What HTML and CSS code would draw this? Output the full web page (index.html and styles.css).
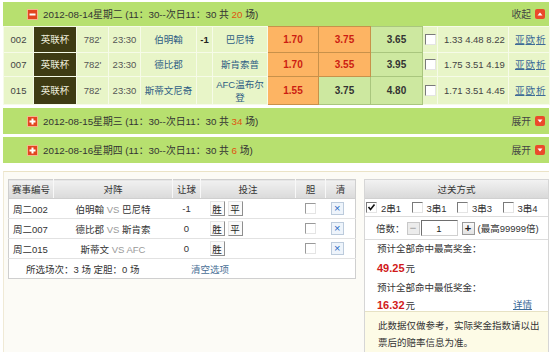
FILE: index.html
```html
<!DOCTYPE html>
<html lang="zh-CN">
<head>
<meta charset="utf-8">
<title>竞彩</title>
<link rel="stylesheet" href="styles.css">
</head>
<body>
<div class="page">
  <section class="day">
    <div class="day-head first">
      <div class="day-title">
        <svg class="sq" width="11" height="11" viewBox="0 0 11 11"><rect x="0.5" y="0.5" width="10" height="10" fill="#e2461f" stroke="#f3b58c"/><rect x="2.5" y="4.5" width="6" height="2" fill="#fff"/></svg>
        <span>2012-08-14星期二 (11：30--次日11：30 共 <em>20</em> 场)</span>
      </div>
      <div class="toggle">收起<svg class="tg" width="10" height="10" viewBox="0 0 10 10"><rect x="0" y="0" width="10" height="10" rx="2" fill="#ea4a2b"/><path d="M2.5 6.5 L5 3.5 L7.5 6.5 Z" fill="#fff"/></svg></div>
    </div>
    <table class="matches">
      <colgroup>
        <col class="c1"><col class="c2"><col class="c3"><col class="c4"><col class="c5"><col class="c6"><col class="c7"><col class="c8"><col class="c9"><col class="c10"><col class="c11"><col class="c12"><col class="c13">
      </colgroup>
      <tr class="r1">
        <td>002</td><td class="lg">英联杯</td><td class="gr">782'</td><td class="gr">23:30</td>
        <td class="team">伯明翰</td><td class="hc">-1</td><td class="team">巴尼特</td>
        <td class="od sel"><b>1.70</b></td><td class="od sel"><b>3.75</b></td><td class="od">3.65</td>
        <td><span class="cb"></span></td><td class="eu">1.33 4.48 8.22</td>
        <td class="lk"><a>亚</a><a>欧</a><a>析</a></td>
      </tr>
      <tr class="r2">
        <td>007</td><td class="lg">英联杯</td><td class="gr">782'</td><td class="gr">23:30</td>
        <td class="team">德比郡</td><td class="hc"></td><td class="team">斯肯索普</td>
        <td class="od sel"><b>1.70</b></td><td class="od sel"><b>3.55</b></td><td class="od">3.95</td>
        <td><span class="cb"></span></td><td class="eu">1.75 3.51 4.19</td>
        <td class="lk"><a>亚</a><a>欧</a><a>析</a></td>
      </tr>
      <tr class="r3">
        <td>015</td><td class="lg">英联杯</td><td class="gr">782'</td><td class="gr">23:30</td>
        <td class="team">斯蒂文尼奇</td><td class="hc"></td><td class="team">AFC温布尔登</td>
        <td class="od sel"><b>1.55</b></td><td class="od">3.75</td><td class="od">4.80</td>
        <td><span class="cb"></span></td><td class="eu">1.71 3.51 4.45</td>
        <td class="lk"><a>亚</a><a>欧</a><a>析</a></td>
      </tr>
    </table>
  </section>

  <section class="day">
    <div class="day-head">
      <div class="day-title">
        <svg class="sq" width="11" height="11" viewBox="0 0 11 11"><rect x="0.5" y="0.5" width="10" height="10" fill="#e2461f" stroke="#f3b58c"/><rect x="2.5" y="4.5" width="6" height="2" fill="#fff"/><rect x="4.5" y="2.5" width="2" height="6" fill="#fff"/></svg>
        <span>2012-08-15星期三 (11：30--次日11：30 共 <em>34</em> 场)</span>
      </div>
      <div class="toggle">展开<svg class="tg" width="10" height="10" viewBox="0 0 10 10"><rect x="0" y="0" width="10" height="10" rx="2" fill="#ea4a2b"/><path d="M2.5 3.5 L7.5 3.5 L5 6.5 Z" fill="#fff"/></svg></div>
    </div>
  </section>

  <section class="day">
    <div class="day-head">
      <div class="day-title">
        <svg class="sq" width="11" height="11" viewBox="0 0 11 11"><rect x="0.5" y="0.5" width="10" height="10" fill="#e2461f" stroke="#f3b58c"/><rect x="2.5" y="4.5" width="6" height="2" fill="#fff"/><rect x="4.5" y="2.5" width="2" height="6" fill="#fff"/></svg>
        <span>2012-08-16星期四 (11：30--次日11：30 共 <em>6</em> 场)</span>
      </div>
      <div class="toggle">展开<svg class="tg" width="10" height="10" viewBox="0 0 10 10"><rect x="0" y="0" width="10" height="10" rx="2" fill="#ea4a2b"/><path d="M2.5 3.5 L7.5 3.5 L5 6.5 Z" fill="#fff"/></svg></div>
    </div>
  </section>

  <div class="bet-area">
    <table class="picks">
      <colgroup><col class="p1"><col class="p2"><col class="p3"><col class="p4"><col class="p5"><col class="p6"></colgroup>
      <thead>
        <tr><th>赛事编号</th><th>对阵</th><th>让球</th><th>投注</th><th>胆</th><th>清</th></tr>
      </thead>
      <tbody>
        <tr>
          <td class="no">周二002</td><td class="vsc">伯明翰 <span class="vs">VS</span> 巴尼特</td><td>-1</td>
          <td class="bets"><span class="btn">胜</span><span class="btn">平</span></td>
          <td><span class="cb light"></span></td><td><span class="clr">×</span></td>
        </tr>
        <tr>
          <td class="no">周二007</td><td class="vsc">德比郡 <span class="vs">VS</span> 斯肯索</td><td>0</td>
          <td class="bets"><span class="btn">胜</span><span class="btn">平</span></td>
          <td><span class="cb light"></span></td><td><span class="clr">×</span></td>
        </tr>
        <tr>
          <td class="no">周二015</td><td class="vsc">斯蒂文 <span class="vs">VS AFC</span></td><td>0</td>
          <td class="bets"><span class="btn">胜</span></td>
          <td><span class="cb light"></span></td><td><span class="clr">×</span></td>
        </tr>
        <tr class="sum">
          <td colspan="6"><span class="count">所选场次：3 场 定胆：0 场</span><a class="clear">清空选项</a></td>
        </tr>
      </tbody>
    </table>

    <div class="panel">
      <div class="panel-head">过关方式</div>
      <div class="types">
        <span class="type"><span class="cb on"><svg width="9" height="9" viewBox="0 0 9 9"><path d="M1.5 4 L3.5 6.5 L7.5 1.5" fill="none" stroke="#111" stroke-width="1.6"/></svg></span>2串1</span>
        <span class="type"><span class="cb"></span>3串1</span>
        <span class="type"><span class="cb"></span>3串3</span>
        <span class="type"><span class="cb"></span>3串4</span>
      </div>
      <div class="multi">
        <span>倍数：</span>
        <span class="pm off">−</span>
        <span class="inp">1</span>
        <span class="pm">+</span>
        <span>(最高99999倍)</span>
      </div>
      <div class="prize">
        <p class="l1">预计全部命中最高奖金：</p>
        <p class="l2"><b>49.25</b>元</p>
        <p class="l3">预计全部命中最低奖金：</p>
        <p class="l4"><span><b>16.32</b>元</span><a class="detail">详情</a></p>
      </div>
      <div class="note">此数据仅做参考，实际奖金指数请以出票后的赔率信息为准。</div>
    </div>
  </div>
</div>
</body>
</html>
```

FILE: styles.css
```css
* { box-sizing: border-box; }
html, body { margin: 0; padding: 0; background: #fff; }
body {
  font-family: "Liberation Sans", "Noto Sans CJK SC", sans-serif;
  font-size: 9.5px;
  color: #333;
  overflow: hidden;
  height: 352px;
}
a { color: #3d6b97; text-decoration: underline; }
p { margin: 0; }

.page { padding: 2px 1px 0 3px; width: 550px; height: 352px; overflow: hidden; }

/* day headers */
.day + .day { margin-top: 3px; }
.day-head {
  height: 26px;
  display: flex;
  align-items: center;
  justify-content: space-between;
  background: #b7e06f;
  padding: 0 4px 0 24px;
  color: #333;
}
.day-head.first { height: 24px; }
.day-title { display: flex; align-items: center; gap: 5px; font-size: 9.8px; }
.day-title em { font-style: normal; color: #e0540f; }
.toggle { display: flex; align-items: center; gap: 4px; color: #444; font-size: 9.8px; }
.sq, .tg { display: block; }

/* matches table */
.matches {
  width: 546px;
  border-collapse: collapse;
  table-layout: fixed;
  background: #e8f5c8;
}
.c1 { width: 30px; } .c2 { width: 43px; } .c3 { width: 32px; } .c4 { width: 32px; }
.c5 { width: 56px; } .c6 { width: 16px; } .c7 { width: 55px; } .c8 { width: 51px; }
.c9 { width: 52px; } .c10 { width: 52px; } .c11 { width: 15px; } .c12 { width: 71px; } .c13 { width: 41px; }
.matches td {
  border: 1px solid #f6fbe8;
  text-align: center;
  padding: 0 1px;
  color: #444;
  line-height: 12px;
}
.matches .r1 td { height: 26px; }
.matches .r2 td { height: 24px; }
.matches .r3 td { height: 28px; }
.matches td.lg { background: #3e3b14; color: #eeeedd; }
.matches td.gr { color: #555; }
.matches td.team { color: #2e5d84; padding: 0 3px; line-height: 13px; }
.matches td.hc { font-weight: bold; color: #222; }
.matches td.od {
  background: #cde8a0;
  border: 1px solid #a9c67e;
  font-weight: bold;
  font-size: 10px;
  color: #333;
}
.matches td.od.sel {
  background: #fdb463;
  border: 1px solid #c8914a;
  color: #cc1d12;
}
.matches td.eu { color: #444; text-align: left; padding-left: 6px; }
.matches td.lk { text-align: left; padding-left: 6px; }
.matches td.lk a { margin-right: 1px; color: #3d6b97; }

/* classic checkbox */
.cb {
  display: inline-block;
  width: 11px;
  height: 11px;
  background: #fff;
  border-top: 1px solid #7a7a7a;
  border-left: 1px solid #7a7a7a;
  border-right: 1px solid #e4e4e4;
  border-bottom: 1px solid #e4e4e4;
  vertical-align: middle;
}
.cb.light { border-top-color: #9a9a9a; border-left-color: #9a9a9a; }
.cb svg { display: block; margin: 0; }

/* bottom area */
.bet-area {
  margin-top: 8px;
  border-top: 1px solid #ebe3c6;
  border-left: 1px solid #f0ead6;
  background: #fcfbf6;
  padding: 7px 0 0 4px;
  display: flex;
  align-items: flex-start;
  gap: 8px;
  height: 182px;
}

.picks {
  width: 347px;
  border-collapse: collapse;
  table-layout: fixed;
  border: 1px solid #cfcfcf;
  background: #fff;
}
.p1 { width: 45px; } .p2 { width: 119px; } .p3 { width: 28px; }
.p4 { width: 95px; } .p5 { width: 30px; } .p6 { width: 30px; }
.picks th {
  height: 19px;
  font-weight: normal;
  color: #333;
  background: linear-gradient(#f1f1f1, #dadada);
  border-left: 1px solid #f8f8f8;
  border-bottom: 1px solid #cfcfcf;
  text-align: center;
  padding: 0;
}
.picks th:first-child { border-left: none; }
.picks td {
  height: 20px;
  border-bottom: 1px solid #e2e2e2;
  text-align: center;
  padding: 0;
  color: #333;
}
.picks td.no { text-align: left; padding-left: 4px; }
.picks .vs { color: #999; }
.picks td.bets { text-align: left; padding-left: 9px; }
.btn {
  display: inline-flex;
  align-items: center;
  justify-content: center;
  width: 15px;
  height: 15px;
  margin-right: 3px;
  background: #fafafa;
  border-top: 1px solid #e6e6e6;
  border-left: 1px solid #e6e6e6;
  border-right: 1px solid #8e8e8e;
  border-bottom: 1px solid #8e8e8e;
  color: #222;
  vertical-align: middle;
}
.clr {
  display: inline-flex;
  align-items: center;
  justify-content: center;
  width: 13px;
  height: 13px;
  background: #eef4fb;
  border: 1px solid #bccbdc;
  color: #2c6cc4;
  font-size: 11px;
  line-height: 1;
  vertical-align: middle;
  margin-right: 6px;
}
.picks tr.sum td { border-bottom: none; text-align: left; padding-left: 17px; }
.count { display: inline-block; width: 165px; color: #333; }
.clear { color: #4a6f96; text-decoration: none; }

/* right panel */
.panel {
  width: 186px;
  border: 1px solid #d6d6d6;
  border-bottom: none;
  background: #fff;
  height: 174px;
  overflow: hidden;
}
.panel-head {
  height: 19px;
  display: flex;
  align-items: center;
  justify-content: center;
  background: linear-gradient(#f2f2f2, #d9d9d9);
  border-bottom: 1px solid #d0d0d0;
  color: #333;
}
.types {
  height: 18px;
  display: flex;
  align-items: center;
  padding-left: 1px;
  border-bottom: 1px solid #dcdcdc;
}
.type { width: 46px; display: flex; align-items: center; gap: 4px; color: #333; }
.multi {
  height: 23px;
  display: flex;
  align-items: center;
  padding-left: 11px;
  border-bottom: 1px solid #dcdcdc;
  color: #333;
}
.pm {
  display: inline-flex;
  align-items: center;
  justify-content: center;
  width: 13px;
  height: 13px;
  border: 1px solid #9a9a9a;
  background: linear-gradient(#fafafa, #e2e2e2);
  color: #222;
  font-weight: bold;
  font-size: 11px;
  line-height: 1;
  margin-left: 2px;
}
.pm.off { border-color: #c8c8c8; color: #b0b0b0; background: #ececec; }
.inp {
  display: inline-flex;
  align-items: center;
  justify-content: center;
  width: 37px;
  height: 16px;
  margin: 0 2px 0 1px;
  background: #fff;
  border-top: 1px solid #6e6e6e;
  border-left: 1px solid #6e6e6e;
  border-right: 1px solid #d0d0d0;
  border-bottom: 1px solid #d0d0d0;
  color: #222;
}
.pm + span:last-child { margin-left: 3px; }
.prize { padding: 0 8px 0 12px; height: 71px; }
.prize .l1 { line-height: 18px; }
.prize .l2 { line-height: 20px; }
.prize .l3 { line-height: 18px; }
.prize .l4 { line-height: 16px; display: flex; justify-content: space-between; padding-right: 8px; }
.prize b { color: #d11a1a; font-size: 11px; margin-right: 1px; }
.detail { color: #3d6b97; }
.note {
  background: #fdfbe6;
  border-top: 1px solid #e7e2c4;
  padding: 5px 8px 0 13px;
  line-height: 17px;
  color: #333;
  height: 46px;
}
```
